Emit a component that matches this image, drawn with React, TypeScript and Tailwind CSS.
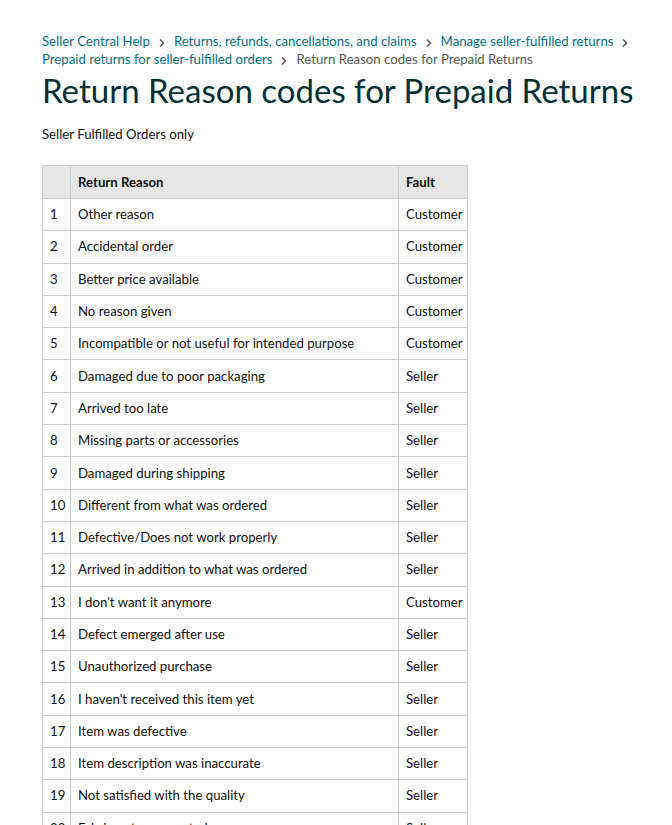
const rows: [string, string][] = [
  ["Other reason", "Customer"],
  ["Accidental order", "Customer"],
  ["Better price available", "Customer"],
  ["No reason given", "Customer"],
  ["Incompatible or not useful for intended purpose", "Customer"],
  ["Damaged due to poor packaging", "Seller"],
  ["Arrived too late", "Seller"],
  ["Missing parts or accessories", "Seller"],
  ["Damaged during shipping", "Seller"],
  ["Different from what was ordered", "Seller"],
  ["Defective/Does not work properly", "Seller"],
  ["Arrived in addition to what was ordered", "Seller"],
  ["I don't want it anymore", "Customer"],
  ["Defect emerged after use", "Seller"],
  ["Unauthorized purchase", "Seller"],
  ["I haven't received this item yet", "Seller"],
  ["Item was defective", "Seller"],
  ["Item description was inaccurate", "Seller"],
  ["Not satisfied with the quality", "Seller"],
  ["Fabric not as expected", "Seller"],
];

function Chevron() {
  return (
    <svg className="mx-[8px] inline-block align-middle" width="8" height="10" viewBox="0 0 8 10" fill="none">
      <path d="M2 1.5 L5.5 5 L2 8.5" stroke="#565959" strokeWidth="1.6" />
    </svg>
  );
}

export default function App() {
  return (
    <div className="min-h-screen overflow-hidden bg-white px-[42px] pt-[32px] font-['Lato',sans-serif] text-[#0f1111]">
      <div className="whitespace-nowrap text-[13.2px] leading-[18px]">
        <div>
          <a className="text-[#007185]">Seller Central Help</a>
          <Chevron />
          <a className="text-[#007185]">Returns, refunds, cancellations, and claims</a>
          <Chevron />
          <a className="text-[#007185]">Manage seller-fulfilled returns</a>
          <Chevron />
        </div>
        <div>
          <a className="text-[#007185]">Prepaid returns for seller-fulfilled orders</a>
          <Chevron />
          <span className="text-[#565959]">Return Reason codes for Prepaid Returns</span>
        </div>
      </div>
      <h1 className="mt-[2px] whitespace-nowrap text-[33px] leading-[40px] text-[#002f36]">Return Reason codes for Prepaid Returns</h1>
      <p className="mt-[14px] text-[13.2px] leading-[20px]">Seller Fulfilled Orders only</p>
      <table className="mt-[21px] w-[425px] table-fixed border-collapse text-[13.2px] leading-[19px]">
        <thead>
          <tr className="h-[33px] bg-[#e6e6e6]">
            <th className="w-[28px] border border-[#cccccc] p-0"></th>
            <th className="w-[328px] border border-[#cccccc] px-[7px] text-left font-bold">Return Reason</th>
            <th className="w-[69px] border border-[#cccccc] px-[7px] text-left font-bold">Fault</th>
          </tr>
        </thead>
        <tbody>
          {rows.map(([reason, fault], i) => (
            <tr key={i} className="h-[32.3px]">
              <td className="border border-[#cccccc] px-[7px]">{i + 1}</td>
              <td className="border border-[#cccccc] px-[7px]">{reason}</td>
              <td className="whitespace-nowrap border border-[#cccccc] px-[7px]">{fault}</td>
            </tr>
          ))}
        </tbody>
      </table>
    </div>
  );
}
